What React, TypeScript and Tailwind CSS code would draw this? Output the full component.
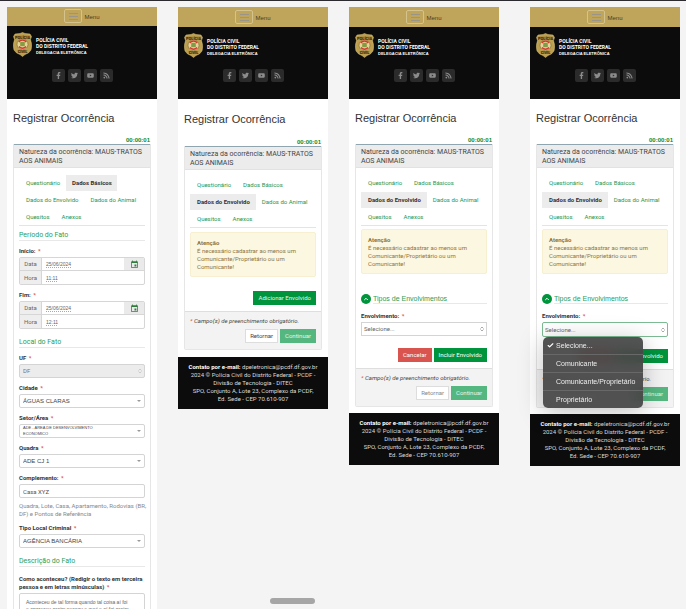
import type { ReactNode } from "react";
import { FaFacebookF, FaTwitter, FaYoutube, FaRss } from "react-icons/fa";
import { MdEvent } from "react-icons/md";
import { Check, ChevronsUpDown, ChevronUp } from "lucide-react";

const TAB_ROWS = [
  ["Questionário", "Dados Básicos"],
  ["Dados do Envolvido", "Dados do Animal"],
  ["Quesitos", "Anexos"],
];

function Badge() {
  return (
    <svg viewBox="0 0 38 50" className="h-[25px] w-[19px] shrink-0" role="img" aria-label="Brasão da Polícia Civil">
      <path d="M19 1 L24 3 L34 4 L37 9 L35 15 Q39 26 36 36 Q32 43 24 45 L19 49 L14 45 Q6 43 2 36 Q-1 26 3 15 L1 9 L4 4 L14 3 Z" fill="#bd9f50" stroke="#dcc67f" strokeWidth="1" />
      <path d="M5 7h28v6H5zM8 36h22l-4 6H12z" fill="#a88a3e" />
      <text x="19" y="13" textAnchor="middle" fontSize="8" fontWeight="bold" fill="#2c230c">POLÍCIA</text>
      <text x="19" y="42" textAnchor="middle" fontSize="8" fontWeight="bold" fill="#2c230c">CIVIL</text>
      <circle cx="19" cy="24.500" r="11" fill="#e3d49c" stroke="#6d5720" strokeWidth="1" />
      <path d="M11.500 20 A9 9 0 0 1 26.500 20" fill="none" stroke="#d2392f" strokeWidth="3" />
      <path d="M12 29 A9 9 0 0 0 26 29" fill="none" stroke="#d2392f" strokeWidth="3" />
      <rect x="14" y="19.500" width="10" height="9" rx="2" fill="#b6b04c" />
      <path d="M15 22h8M15 26h8" stroke="#4f8746" strokeWidth="2" />
    </svg>
  );
}

function SiteHeader({ short }: { short?: boolean }) {
  const social = [
    { name: "Facebook", icon: <FaFacebookF /> },
    { name: "Twitter", icon: <FaTwitter /> },
    { name: "YouTube", icon: <FaYoutube /> },
    { name: "RSS", icon: <FaRss /> },
  ];
  return (
    <header>
      <div className={short ? "flex h-[19px] items-center justify-center gap-[2px] bg-[#bfa45b] pb-px" : "flex h-5 items-center justify-center gap-[2px] bg-[#bfa45b]"}>
        <button aria-label="Abrir menu" className="flex h-[14px] w-[18px] flex-col items-center justify-center gap-[2px] rounded-[2px] border border-[#d5c38e]">
          <span className="h-px w-[9px] bg-[#9a958a]" />
          <span className="h-px w-[9px] bg-[#9a958a]" />
          <span className="h-px w-[9px] bg-[#9a958a]" />
        </button>
        <span className="pt-px font-['Liberation_Sans',Arial,sans-serif] text-[#4a4022]">Menu</span>
      </div>
      <div className={short ? "h-[73px] bg-[#0c0c0c] px-[6px] pt-[6px]" : "h-[72px] bg-[#0c0c0c] px-[6px] pt-[6px]"}>
        <div className="flex items-center gap-[4px] font-bold text-white">
          <Badge />
          <div className="pt-[4px]">
            <p className="text-[5px] leading-[6px]">POLÍCIA CIVIL</p>
            <p className="text-[5px] leading-[6px]">DO DISTRITO FEDERAL</p>
            <p className="font-['Liberation_Sans',Arial,sans-serif] text-[4px] leading-[7px]">DELEGACIA ELETRÔNICA</p>
          </div>
        </div>
        <nav className={short ? "mt-[12px] flex justify-center gap-[3px]" : "mt-[11px] flex justify-center gap-[3px]"}>
          {social.map((s) => (
            <a key={s.name} href="#" aria-label={s.name} className="grid h-[13px] w-[13px] place-items-center rounded-[2px] bg-[#2b2b2b] text-[7px] text-[#8c8c8c]">
              {s.icon}
            </a>
          ))}
        </nav>
      </div>
    </header>
  );
}

function Tabs({ active }: { active: string }) {
  return (
    <nav className="grid gap-y-px border-b border-[#e4e4e4]">
      {TAB_ROWS.map((row) => (
        <div key={row[0]} className="flex whitespace-nowrap">
          {row.map((t) => (
            <a
              key={t}
              href="#"
              aria-current={t === active ? "page" : undefined}
              className={t === active ? "flex h-4 items-center bg-[#ececec] pr-[5px] pl-[6px] font-bold text-[#333] first:pr-[6px] first:pl-[7px]" : "flex h-4 items-center pr-[5px] pl-[6px] text-[#1c9650] first:pr-[6px] first:pl-[7px]"}
            >
              {t}
            </a>
          ))}
        </div>
      ))}
    </nav>
  );
}

function Card({ active, low, children }: { active: string; low?: boolean; children: ReactNode }) {
  return (
    <div className="px-[6px]">
      <h1 className={low ? "pt-[13px] font-['Liberation_Sans',Arial,sans-serif] text-[11px] leading-[14px] text-[#333]" : "pt-[12px] font-['Liberation_Sans',Arial,sans-serif] text-[11px] leading-[14px] text-[#333]"}>
        Registrar Ocorrência
      </h1>
      <p className={low ? "mt-[12px] pr-px text-right font-['Liberation_Sans',Arial,sans-serif] font-bold text-[#0b8a1c]" : "mt-[11px] pr-px text-right font-['Liberation_Sans',Arial,sans-serif] font-bold text-[#0b8a1c]"}>
        00:00:01
      </p>
      <section className="rounded-b-[2px] border-x border-b border-[#e6e6e6]">
        <h2 className="border-t border-b border-t-[#8fa5b0] border-b-[#e2e2e2] bg-[#ececec] pt-[3px] pb-px pl-[5px] text-[7px] leading-[9px] text-[#444]">
          Natureza da ocorrência: MAUS-TRATOS
          <br />
          AOS ANIMAIS
        </h2>
        <div className="px-[5px] pt-[7px]">
          <Tabs active={active} />
          {children}
        </div>
      </section>
    </div>
  );
}

function Star() {
  return <span className="pl-px text-[#d9534f]">*</span>;
}

function SectionTitle({ children, first }: { children: ReactNode; first?: boolean }) {
  return (
    <h3 className={first ? "mt-[5px] border-b border-[#e8e8e8] text-[7px] leading-[9px] text-[#1fa05a]" : "mt-[9px] border-b border-[#e8e8e8] text-[7px] leading-[9px] text-[#1fa05a]"}>
      {children}
    </h3>
  );
}

function DateGroup({ id, label, date, time }: { id: string; label: string; date: string; time: string }) {
  return (
    <fieldset className="mt-[6px] min-w-0">
      <legend className="font-bold text-[#333]">
        {label} <Star />
      </legend>
      <div className="mt-[2px] rounded-[2px] border border-[#d6d6d6] text-[#666]">
        <div className="flex h-[13px] border-b border-[#d6d6d6]">
          <label htmlFor={id + "-data"} className="grid w-[22px] place-items-center border-r border-[#d6d6d6] bg-[#eee]">Data</label>
          <input id={id + "-data"} defaultValue={date} className="min-w-0 flex-1 pl-[4px] font-['Liberation_Sans',Arial,sans-serif] text-[5px] underline decoration-[#aaa] decoration-dotted" />
          <button aria-label="Abrir calendário" className="grid w-5 place-items-center bg-[#eaeaea] text-[9px] text-[#2f7d3c]">
            <MdEvent />
          </button>
        </div>
        <div className="flex h-[13px]">
          <label htmlFor={id + "-hora"} className="grid w-[22px] place-items-center border-r border-[#d6d6d6] bg-[#eee]">Hora</label>
          <input id={id + "-hora"} defaultValue={time} className="min-w-0 flex-1 pl-[4px] font-['Liberation_Sans',Arial,sans-serif] text-[5px] underline decoration-[#aaa] decoration-dotted" />
        </div>
      </div>
    </fieldset>
  );
}

function Caret() {
  return <span className="pointer-events-none mr-[4px] self-center justify-self-end border-x-2 border-t-2 border-x-transparent border-t-[#999] [grid-area:1/1]" />;
}

function SelectField({ id, label, value, disabled, wrapped }: { id: string; label: string; value: string; disabled?: boolean; wrapped?: boolean }) {
  return (
    <div className="mt-[6px]">
      <label htmlFor={id} className="block font-bold text-[#333]">
        {label} <Star />
      </label>
      <div className="mt-[2px] grid">
        <select
          id={id}
          disabled={disabled}
          className={
            disabled
              ? "h-[14px] w-full appearance-none rounded-[2px] border border-[#d4d4d4] bg-[#ececec] pl-[3px] text-[#777] opacity-100 [grid-area:1/1]"
              : wrapped
                ? "h-[14px] w-full appearance-none rounded-[2px] border border-[#d4d4d4] bg-white pl-[3px] text-transparent [grid-area:1/1]"
                : "h-[14px] w-full appearance-none rounded-[2px] border border-[#d4d4d4] bg-white pl-[3px] font-['Liberation_Sans',Arial,sans-serif] text-[#444] [grid-area:1/1]"
          }
        >
          <option>{value}</option>
        </select>
        {wrapped && (
          <span aria-hidden="true" className="pointer-events-none mr-[30px] self-center pl-[4px] font-['Liberation_Sans',Arial,sans-serif] text-[4px] leading-[6px] whitespace-nowrap text-[#444] [grid-area:1/1]">
            ADE - AREA DE DESENVOLVIMENTO
            <br />
            ECONOMICO
          </span>
        )}
        {disabled ? <ChevronsUpDown className="pointer-events-none mr-[2px] size-[6px] self-center justify-self-end text-[#aaa] [grid-area:1/1]" /> : <Caret />}
      </div>
    </div>
  );
}

function Alert({ tight }: { tight?: boolean }) {
  return (
    <div role="alert" className={tight ? "mt-[3px] rounded-[2px] border border-[#f7efcf] bg-[#fbf7e0] px-[6px] pt-[6px] pb-[5px] text-[#8f7440]" : "mt-[4px] rounded-[2px] border border-[#f7efcf] bg-[#fbf7e0] px-[6px] pt-[6px] pb-[5px] text-[#8f7440]"}>
      <strong className="block">Atenção</strong>
      É necessário cadastrar ao menos um
      <br />
      Comunicante/Proprietário ou um
      <br />
      Comunicante!
    </div>
  );
}

function CardFooter({ muted }: { muted?: boolean }) {
  return (
    <div className="-mx-[5px] mt-[6px] border-t border-[#dedede] bg-[#f3f3f3] px-[5px] pt-[5px] pb-[6px]">
      <p className="text-[#444] italic">
        <span className="text-[#d9534f]">*</span> Campo(s) de preenchimento obrigatório.
      </p>
      <div className="mt-[4px] flex justify-end gap-[2px]">
        <button className={muted ? "h-[14px] border border-[#ddd] bg-white px-[4px] text-[#888]" : "h-[14px] border border-[#ddd] bg-white px-[4px] text-[#444]"}>Retornar</button>
        <button className="h-[14px] bg-[#55b780] px-[5px] text-[#e4f6ec]">Continuar</button>
      </div>
    </div>
  );
}

function SiteFooter({ close }: { close?: boolean }) {
  return (
    <footer className={close ? "mt-[6px] bg-[#0c0c0c] py-[6px] text-center whitespace-nowrap text-[#dadada]" : "mt-[7px] bg-[#0c0c0c] py-[6px] text-center whitespace-nowrap text-[#dadada]"}>
      <p>
        <strong className="text-white">Contato por e-mail:</strong> dpeletronica@pcdf.df.gov.br
      </p>
      <p>2024 © Polícia Civil do Distrito Federal - PCDF -</p>
      <p>Divisão de Tecnologia - DITEC</p>
      <p>SPO, Conjunto A, Lote 23, Complexo da PCDF,</p>
      <p>Ed. Sede - CEP 70.610-907</p>
    </footer>
  );
}

function OptionMenu() {
  const options = ["Selecione...", "Comunicante", "Comunicante/Proprietário", "Proprietário"];
  return (
    <ul role="listbox" aria-label="Envolvimento" className="absolute top-[15px] left-px z-10 w-[100px] divide-y divide-[#686868] rounded-[5px] bg-[#454545]/93 font-['Liberation_Sans',Arial,sans-serif] text-[7px] text-[#ededed] shadow-[0_4px_24px_rgba(0,0,0,0.25)] backdrop-blur-[6px]">
      {options.map((o, i) => (
        <li key={o} role="option" aria-selected={i === 0} className="flex h-[18px] items-center gap-[2px] pl-[4px] last:h-[17px]">
          <span className="w-[7px]">{i === 0 && <Check className="size-[7px] text-white" strokeWidth={4} />}</span>
          {o}
        </li>
      ))}
    </ul>
  );
}

function InvolvementForm({ id, open }: { id: string; open?: boolean }) {
  return (
    <>
      <Alert tight />
      <div className="mt-5 flex items-end gap-[2px]">
        <button aria-label="Recolher seção" className="grid size-[10px] place-items-center rounded-full bg-[#00943c] text-white">
          <ChevronUp className="size-[6px]" strokeWidth={4} />
        </button>
        <h3 className="flex-1 border-b border-[#e8e8e8] font-['Liberation_Sans',Arial,sans-serif] text-[7px] leading-[9px] text-[#1fa05a]">Tipos de Envolvimentos</h3>
      </div>
      <label htmlFor={id} className="mt-[8px] block font-bold text-[#333]">
        Envolvimento: <Star />
      </label>
      <div className="relative mt-[2px] grid">
        <select
          id={id}
          className={open ? "h-[15px] w-full appearance-none rounded-[2px] border border-[#7dbb94] bg-white pl-[2px] text-[#666] [grid-area:1/1]" : "h-[14px] w-full appearance-none border border-[#d4d4d4] bg-white pl-[2px] text-[#666] [grid-area:1/1]"}
        >
          <option>Selecione...</option>
        </select>
        <ChevronsUpDown className="pointer-events-none mr-[2px] size-[6px] self-center justify-self-end text-[#555] [grid-area:1/1]" />
        {open && <OptionMenu />}
      </div>
      <div className="mt-[12px] flex justify-end gap-[2px] text-white">
        <button className="h-[14px] bg-[#d9534f] px-[5px]">Cancelar</button>
        <button className="h-[14px] bg-[#00943c] px-[5px]">Incluir Envolvido</button>
      </div>
      <CardFooter muted />
    </>
  );
}

export default function App() {
  return (
    <div className="relative h-screen overflow-hidden border-t border-[#2b2a2e] bg-[#f4f4f4] pt-[6px] pr-[6px] pl-[7px] font-[Roboto,Arial,sans-serif] text-[6px] leading-[8px]">
      <div className="flex items-start gap-[21px]">
        <main className="min-w-0 flex-1 bg-white pb-5">
          <SiteHeader short />
          <Card active="Dados Básicos">
            <SectionTitle first>Período do Fato</SectionTitle>
            <DateGroup id="inicio" label="Início:" date="25/06/2024" time="11:11" />
            <DateGroup id="fim" label="Fim:" date="25/06/2024" time="12:11" />
            <SectionTitle>Local do Fato</SectionTitle>
            <SelectField id="uf" label="UF" value="DF" disabled />
            <SelectField id="cidade" label="Cidade" value="ÁGUAS CLARAS" />
            <SelectField id="setor" label="Setor/Área" value="ADE - AREA DE DESENVOLVIMENTO ECONOMICO" wrapped />
            <SelectField id="quadra" label="Quadra" value="ADE CJ 1" />
            <div className="mt-[6px]">
              <label htmlFor="complemento" className="block font-bold text-[#333]">
                Complemento: <Star />
              </label>
              <input id="complemento" defaultValue="Casa XYZ" className="mt-[2px] block h-[14px] w-full rounded-[2px] border border-[#d4d4d4] pl-[3px] text-[#555]" />
              <p className="mt-[4px] whitespace-nowrap text-[#888]">
                Quadra, Lote, Casa, Apartamento, Rodovias (BR,
                <br />
                DF) e Pontos de Referência
              </p>
            </div>
            <SelectField id="tipo" label="Tipo Local Criminal" value="AGÊNCIA BANCÁRIA" />
            <SectionTitle>Descrição do Fato</SectionTitle>
            <label htmlFor="relato" className="mt-[8px] block font-bold whitespace-nowrap text-[#333]">
              Como aconteceu? (Redigir o texto em terceira
              <br />
              pessoa e em letras minúsculas) <Star />
            </label>
            <textarea
              id="relato"
              rows={5}
              defaultValue={"Aconteceu de tal forma quando tal coisa aí foi\ne apareceu assim nessou e ouvi e aí foi assim"}
              className="mt-[2px] block w-full resize-none overflow-hidden rounded-[2px] border border-[#d4d4d4] py-[5px] pl-[6px] font-['Liberation_Sans',Arial,sans-serif] text-[5px] leading-[7px] text-[#666]"
            />
          </Card>
        </main>

        <main className="min-w-0 flex-1 bg-white">
          <SiteHeader />
          <Card active="Dados do Envolvido" low>
            <Alert />
            <div className="mt-[14px] flex justify-end text-[#e4f6ec]">
              <button className="h-[14px] bg-[#00943c] px-[5px]">Adicionar Envolvido</button>
            </div>
            <CardFooter />
          </Card>
          <SiteFooter />
        </main>

        <main className="min-w-0 flex-1 bg-white">
          <SiteHeader />
          <Card active="Dados do Envolvido">
            <InvolvementForm id="envolvimento" />
          </Card>
          <SiteFooter close />
        </main>

        <main className="ml-[10px] min-w-0 flex-1 bg-white">
          <SiteHeader />
          <Card active="Dados do Envolvido">
            <InvolvementForm id="envolvimento-aberto" open />
          </Card>
          <SiteFooter close />
        </main>
      </div>
      <div className="absolute bottom-[5px] left-[270px] h-[6px] w-[45px] rounded-full bg-[#a6a6a6]" />
    </div>
  );
}
